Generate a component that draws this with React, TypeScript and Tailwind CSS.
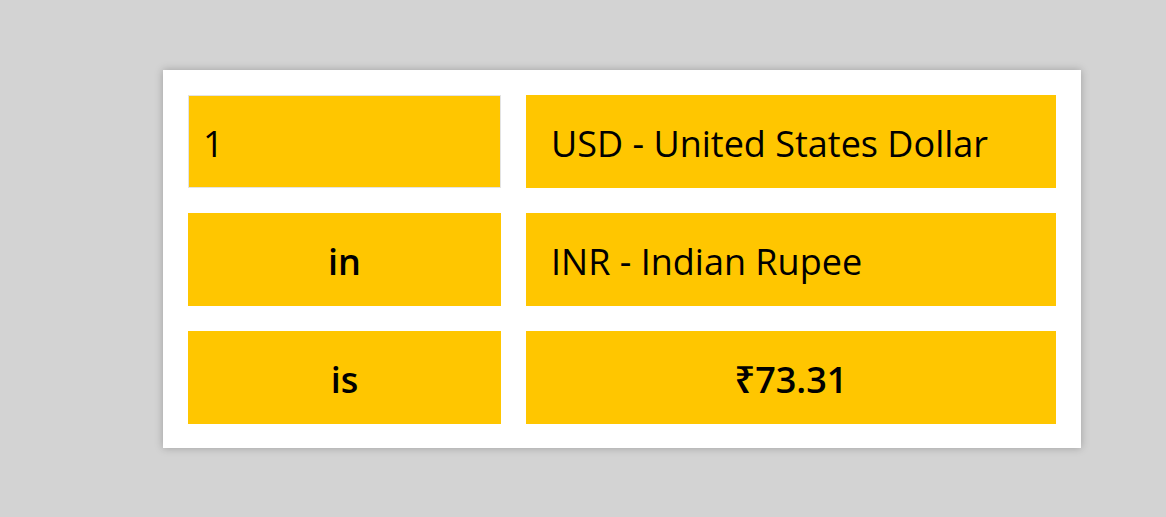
import React from "react";

const font = { fontFamily: '"Open Sans", "Noto Sans", "DejaVu Sans", sans-serif' };

export default function App() {
  return (
    <div className="min-h-[517px] w-full bg-[#d3d3d3] pt-[70px] pl-[163px]" style={font}>
      <div className="w-[918px] bg-white px-[25px] pt-[25px] pb-[24px] shadow-[0_0_8px_rgba(0,0,0,0.25)]">
        <div className="grid grid-cols-[313px_530px] gap-x-[25px] gap-y-[25px] text-black text-[36px] leading-none">
          <div className="h-[93px] bg-[#ffc600] border border-[#e3e3e3] flex items-center pl-[14px] pt-[4px]">
            1
          </div>
          <div className="h-[93px] bg-[#ffc600] flex items-center pl-[25px] pt-[4px]">
            USD - United States Dollar
          </div>
          <div className="h-[93px] bg-[#ffc600] flex items-center justify-center pt-[4px] font-semibold">
            in
          </div>
          <div className="h-[93px] bg-[#ffc600] flex items-center pl-[25px] pt-[4px]">
            INR - Indian Rupee
          </div>
          <div className="h-[93px] bg-[#ffc600] flex items-center justify-center pt-[4px] font-semibold">
            is
          </div>
          <div className="h-[93px] bg-[#ffc600] flex items-center justify-center pt-[4px] font-semibold">
            ₹73.31
          </div>
        </div>
      </div>
    </div>
  );
}
